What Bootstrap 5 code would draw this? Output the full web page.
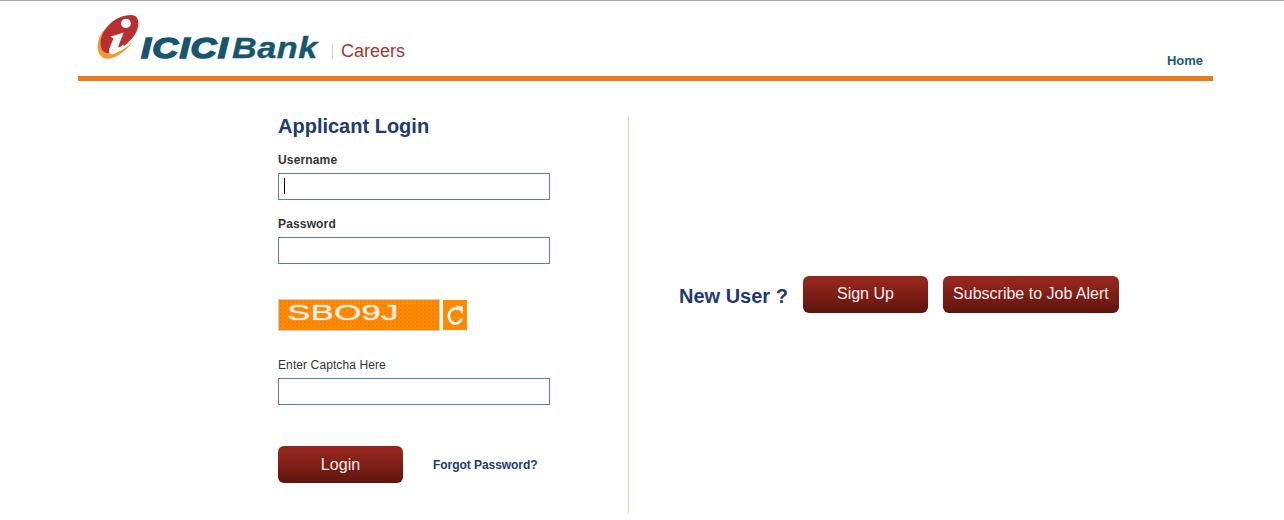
<!DOCTYPE html>
<html lang="en">
<head>
<meta charset="utf-8">
<title>ICICI Bank Careers</title>
<link href="https://cdn.jsdelivr.net/npm/bootstrap@5.3.0/dist/css/bootstrap.min.css" rel="stylesheet">
<style>
html,body{height:520px;overflow:hidden}
body{font-family:"Liberation Sans",Arial,sans-serif;background:#fff;color:#333;border-top:1px solid #a9a9a9;font-size:12px}
.shell{width:1135px;margin-left:78px}
.top-head{height:75px}
.brand-area{padding-left:16px;height:75px}
.brand-mark{width:47px;height:54px;margin-top:9px;flex:none}
.brand-icici{font:italic 700 30px/1 "Liberation Sans",sans-serif;color:#17566f;letter-spacing:1px;-webkit-text-stroke:1.5px #17566f;margin-top:32px;width:91px;transform-origin:left;transform:scaleX(1.2)}
.brand-bank{font:italic 700 30px/1 "Liberation Sans",sans-serif;color:#17566f;letter-spacing:.5px;-webkit-text-stroke:.4px #17566f;margin-top:32px;width:100px;transform-origin:left;transform:scaleX(1.14)}
.brand-sep{width:1px;height:15px;background:#d8cfae;margin-top:43px;flex:none}
.brand-careers{font:18px/1 "Liberation Sans",sans-serif;color:#9c3b30;margin:41px 0 0 8px}
.home-link{font-size:13px;font-weight:700;color:#1b5a7a;text-decoration:none;margin:0 10px 8px 0;line-height:15px}
.orange-rule{height:5px;background:#ec7a18}
.page-body{padding:35px 0 0 200px}
.login-pane{width:351px;height:397px;border-right:1px solid #dcd9b5;flex:none}
.login-title{font-size:20px;font-weight:700;color:#213a72;line-height:21px;margin:0 0 16px}
.field-label{display:block;font-size:12px;line-height:14px;margin:0 0 6px;color:#333;letter-spacing:.1px}
.field-label.strong{font-weight:700;letter-spacing:.15px}
.field-box{position:relative;width:272px;height:27px;margin-bottom:17px}
.field-box input{display:block;width:100%;height:27px;border:1px solid #5f7f9f;border-radius:0;padding:0 5px;outline:0}
.caret-mark{position:absolute;left:6px;top:5px;width:1px;height:16px;background:#000}
.captcha-row{margin:35px 0 27px;gap:3px;height:32px}
.captcha-pic{width:162px;height:32px;border:1px solid #ccc;background-color:#ff8a00;background-image:radial-gradient(#f47f00 1px,transparent 1px);background-size:4px 4px;overflow:hidden;padding-left:8px}
.captcha-text{display:inline-block;color:#fff2e8;font:22px/25px "Liberation Sans",sans-serif;transform-origin:left;transform:scaleX(1.6);text-shadow:0 0 1px #ffd9b0}
.captcha-refresh{width:24px;height:30px;background:#ff8a00;margin-top:1px}
.red-btn{background:linear-gradient(#93261d 15%,#5f140e);color:#f3eded;border:0;border-radius:6px;height:37px;font:16px/35px "Liberation Sans",sans-serif;padding:0 0 2px;text-align:center;flex:none}
.login-actions{margin-top:41px}
.btn-login{width:125px;padding:0;line-height:37px;letter-spacing:.1px}
.forgot-link{font-size:12px;font-weight:700;color:#213a72;text-decoration:none;margin-left:30px;letter-spacing:-.05px}
.side-pane{padding-left:50px;gap:15px;flex:none;padding-bottom:37px}
.new-user{font-size:20px;font-weight:700;color:#213a72;line-height:23px}
.btn-signup{width:125px;margin-top:-4px}
.btn-alert{width:176px;margin-top:-4px}
</style>
</head>
<body>
<div class="shell">
  <header class="top-head d-flex justify-content-between align-items-end">
    <div class="brand-area d-flex align-items-start">
      <svg class="brand-mark" viewBox="0 0 141 162" aria-hidden="true">
        <g transform="translate(-14,-4) scale(1.12,1.08)">
          <path d="M52 48C24 68 14 108 30 130c10 14 30 10 50-2 14-9 26-22 36-36-22 22-44 34-64 30C36 118 30 100 34 80z" fill="#f39a35"/>
          <path d="M116 18c18 1 21 30 6 54-16 24-38 42-60 50-20 7-32-4-32-28C32 58 70 15 116 18z" fill="#b7302f"/>
          <circle cx="98" cy="41" r="13" fill="#fff"/>
          <path d="M56 78 92 66 78 104c-2 6 4 4 12-4l5 4c-13 15-29 26-38 22-8-4-3-16 0-24l8-20z" fill="#fff"/>
        </g>
      </svg>
      <span class="brand-icici">ICICI</span>
      <span class="brand-bank">Bank</span>
      <span class="brand-sep"></span>
      <span class="brand-careers">Careers</span>
    </div>
    <a class="home-link" href="#">Home</a>
  </header>
  <div class="orange-rule"></div>
  <main class="page-body d-flex">
    <section class="login-pane">
      <h1 class="login-title">Applicant Login</h1>
      <label class="field-label strong" for="u">Username</label>
      <div class="field-box"><input id="u" type="text"><span class="caret-mark"></span></div>
      <label class="field-label strong" for="p">Password</label>
      <div class="field-box"><input id="p" type="password"></div>
      <div class="captcha-row d-flex">
        <div class="captcha-pic"><span class="captcha-text">SBO9J</span></div>
        <div class="captcha-refresh">
          <svg class="d-block" width="24" height="30" viewBox="0 0 24 30" aria-hidden="true"><path d="M15.500 9.500A6.500 7.500 0 1 0 18.500 18.500" fill="none" stroke="#fff" stroke-width="2.600"/><path d="M13 5.500l7 1-.5 7.500z" fill="#fff"/></svg>
        </div>
      </div>
      <label class="field-label" for="c">Enter Captcha Here</label>
      <div class="field-box"><input id="c" type="text"></div>
      <div class="login-actions d-flex align-items-center">
        <button class="red-btn btn-login" type="button">Login</button>
        <a class="forgot-link" href="#">Forgot Password?</a>
      </div>
    </section>
    <section class="side-pane d-flex align-items-center">
      <span class="new-user">New User ?</span>
      <button class="red-btn btn-signup" type="button">Sign Up</button>
      <button class="red-btn btn-alert" type="button">Subscribe to Job Alert</button>
    </section>
  </main>
</div>
<script src="https://cdn.jsdelivr.net/npm/bootstrap@5.3.0/dist/js/bootstrap.bundle.min.js"></script>
</body>
</html>
